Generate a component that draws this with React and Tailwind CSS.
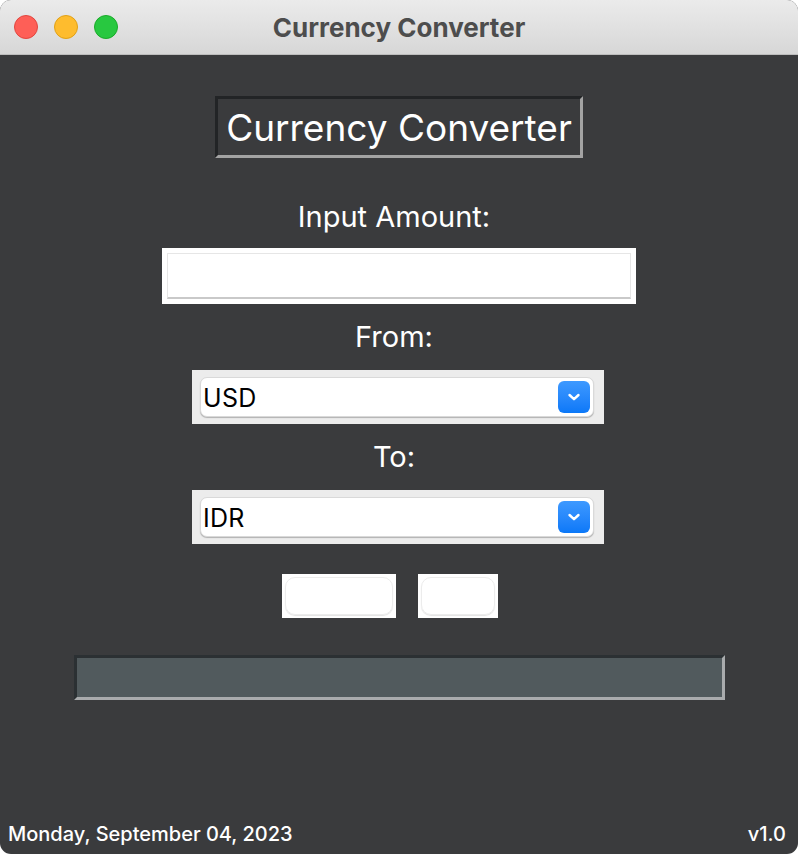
import React from "react";

function Select({ value }) {
  return (
    <div className="w-[412px] h-[54px] bg-[#ececec] flex items-center pl-[8px] pr-[10px] -ml-[2px]">
      <div className="flex-1 h-[40px] bg-white rounded-[7px] border border-[#d9d9d9] shadow-[0_1px_1px_rgba(0,0,0,0.25)] flex items-center justify-between pl-[2px] pr-[3px]">
        <span className="text-[25px] tracking-[0.3px] text-black leading-none mt-[3px]">{value}</span>
        <div className="w-[32px] h-[32px] rounded-[6px] bg-gradient-to-b from-[#3d99ff] to-[#0a78f8] flex items-center justify-center">
          <svg width="14" height="10" viewBox="0 0 14 10">
            <path d="M2.5 3 L7 7.2 L11.5 3" fill="none" stroke="white" strokeWidth="2.4" strokeLinecap="round" strokeLinejoin="round" />
          </svg>
        </div>
      </div>
    </div>
  );
}

export default function App() {
  return (
    <div className="w-[798px] h-[854px] bg-white font-['Inter',sans-serif]">
      <div className="w-[798px] h-[854px] rounded-[11px] overflow-hidden bg-[#3a3b3d] flex flex-col">
        <div className="h-[55px] shrink-0 bg-gradient-to-b from-[#ebebeb] to-[#d7d7d7] border-b border-[#bdbdbd] flex items-center relative">
          <div className="flex gap-[16px] pl-[14px]">
            <div className="w-[24px] h-[24px] rounded-full bg-[#fe5f57] border border-[#e2463f]" />
            <div className="w-[24px] h-[24px] rounded-full bg-[#febc2e] border border-[#e1a116]" />
            <div className="w-[24px] h-[24px] rounded-full bg-[#28c840] border border-[#1aab29]" />
          </div>
          <div className="absolute inset-0 flex items-center justify-center text-[26px] font-bold text-[#4d4d4d] pointer-events-none">
            Currency Converter
          </div>
        </div>
        <div className="flex-1 flex flex-col items-center">
          <div className="mt-[41px] h-[62px] px-[8px] flex items-center border-[3px] border-t-[#222426] border-l-[#222426] border-b-[#a3a3a3] border-r-[#a3a3a3] text-white text-[37px] leading-none">
            <span className="mt-[1px]">Currency Converter</span>
          </div>
          <div className="mt-[43px] h-[30px] flex items-center text-white text-[29px] leading-none mr-[10px]">Input Amount:</div>
          <div className="mt-[17px] w-[474px] h-[56px] bg-white p-[5px]">
            <div className="w-full h-full border border-[#e6e6e6] border-b-2 border-b-[#c9c9c9]" />
          </div>
          <div className="mt-[17px] h-[30px] flex items-center text-white text-[29px] leading-none mr-[10px]">From:</div>
          <div className="mt-[19px]"><Select value="USD" /></div>
          <div className="mt-[17px] h-[30px] flex items-center text-white text-[29px] leading-none mr-[10px]">To:</div>
          <div className="mt-[19px]"><Select value="IDR" /></div>
          <div className="mt-[30px] flex gap-[22px] mr-[18px]">
            <div className="w-[114px] h-[44px] bg-white p-[3px]">
              <div className="w-full h-full rounded-[10px] border border-[#ececec] shadow-[0_1px_1px_rgba(0,0,0,0.12)]" />
            </div>
            <div className="w-[80px] h-[44px] bg-white p-[3px]">
              <div className="w-full h-full rounded-[10px] border border-[#ececec] shadow-[0_1px_1px_rgba(0,0,0,0.12)]" />
            </div>
          </div>
          <div className="mt-[37px] w-[651px] h-[45px] bg-[#515a5d] border-[3px] border-t-[#2b3033] border-l-[#2b3033] border-b-[#a9abad] border-r-[#a9abad]" />
          <div className="flex-1" />
          <div className="w-full flex justify-between items-end px-[8px] pb-[10px] text-white text-[20px] font-medium leading-none">
            <span>Monday, September 04, 2023</span>
            <span className="pr-[4px]">v1.0</span>
          </div>
        </div>
      </div>
    </div>
  );
}
